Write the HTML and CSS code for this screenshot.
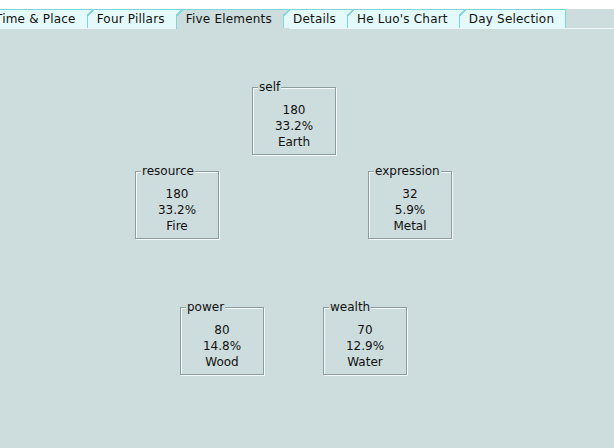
FILE: index.html
```html
<!DOCTYPE html>
<html>
<head>
<meta charset="utf-8">
<link rel="stylesheet" href="styles.css">
</head>
<body>
<div class="app">
  <div class="tabstrip">
    <div class="tab">Time &amp; Place</div>
    <div class="tab">Four Pillars</div>
    <div class="tab selected">Five Elements</div>
    <div class="tab">Details</div>
    <div class="tab">He Luo's Chart</div>
    <div class="tab last">Day Selection</div>
  </div>
  <div class="panel">
    <div class="node n-self"><span class="title">self</span><div>180</div><div>33.2%</div><div>Earth</div></div>
    <div class="node n-resource"><span class="title">resource</span><div>180</div><div>33.2%</div><div>Fire</div></div>
    <div class="node n-expression"><span class="title">expression</span><div>32</div><div>5.9%</div><div>Metal</div></div>
    <div class="node n-power"><span class="title">power</span><div>80</div><div>14.8%</div><div>Wood</div></div>
    <div class="node n-wealth"><span class="title">wealth</span><div>70</div><div>12.9%</div><div>Water</div></div>
  </div>
</div>
</body>
</html>
```
FILE: styles.css
```css
html, body {
  margin: 0;
  padding: 0;
  background: #ffffff;
}
.app {
  width: 614px;
  height: 448px;
  overflow: hidden;
  font-family: "DejaVu Sans", Verdana, sans-serif;
  font-size: 12px;
  color: #111;
  display: flex;
  flex-direction: column;
}
.tabstrip {
  margin-top: 9px;
  height: 19px;
  display: flex;
  background: #cddddd;
  margin-left: -15px;
  border-bottom: 1px solid #eef8f8;
}
.tab {
  position: relative;
  height: 19px;
  line-height: 18px;
  box-sizing: border-box;
  padding: 0 17px 0 9px;
  margin-right: -6px;
  letter-spacing: 0.2px;
  border-top: 1px solid #7fd6d6;
  border-left: 1px solid #7fd6d6;
  background: #e4fafa;
  clip-path: polygon(0 6px, 6px 0, 100% 0, 100% 100%, 0 100%);
  white-space: nowrap;
}
.tab::before {
  content: "";
  position: absolute;
  left: -1px;
  top: -1px;
  width: 7px;
  height: 7px;
  background: linear-gradient(to bottom right, transparent calc(50% - 0.8px), #7fd6d6 calc(50% - 0.8px), #7fd6d6 calc(50% + 0.8px), transparent calc(50% + 0.8px));
}
.tab.selected {
  background: #cddddd;
  height: 20px;
}
.tab.last {
  padding-right: 11px;
  margin-right: 0;
  border-right: 1px solid #7fd6d6;
}
.panel {
  position: relative;
  flex: 1;
  background: #cddddd;
}
.node {
  position: absolute;
  box-sizing: border-box;
  width: 84px;
  height: 68px;
  border: 1px solid #8d9d9d;
  box-shadow: inset 1px 1px 0 #f2fafa, 1px 1px 0 #f2fafa;
  padding-top: 14px;
  line-height: 16px;
  text-align: center;
}
.title {
  position: absolute;
  top: -9px;
  left: 5px;
  padding: 0 1px;
  line-height: 16px;
  background: #cddddd;
}
.n-self { left: 252px; top: 58px; }
.n-resource { left: 135px; top: 142px; }
.n-expression { left: 368px; top: 142px; }
.n-power { left: 180px; top: 278px; }
.n-wealth { left: 323px; top: 278px; }
```
